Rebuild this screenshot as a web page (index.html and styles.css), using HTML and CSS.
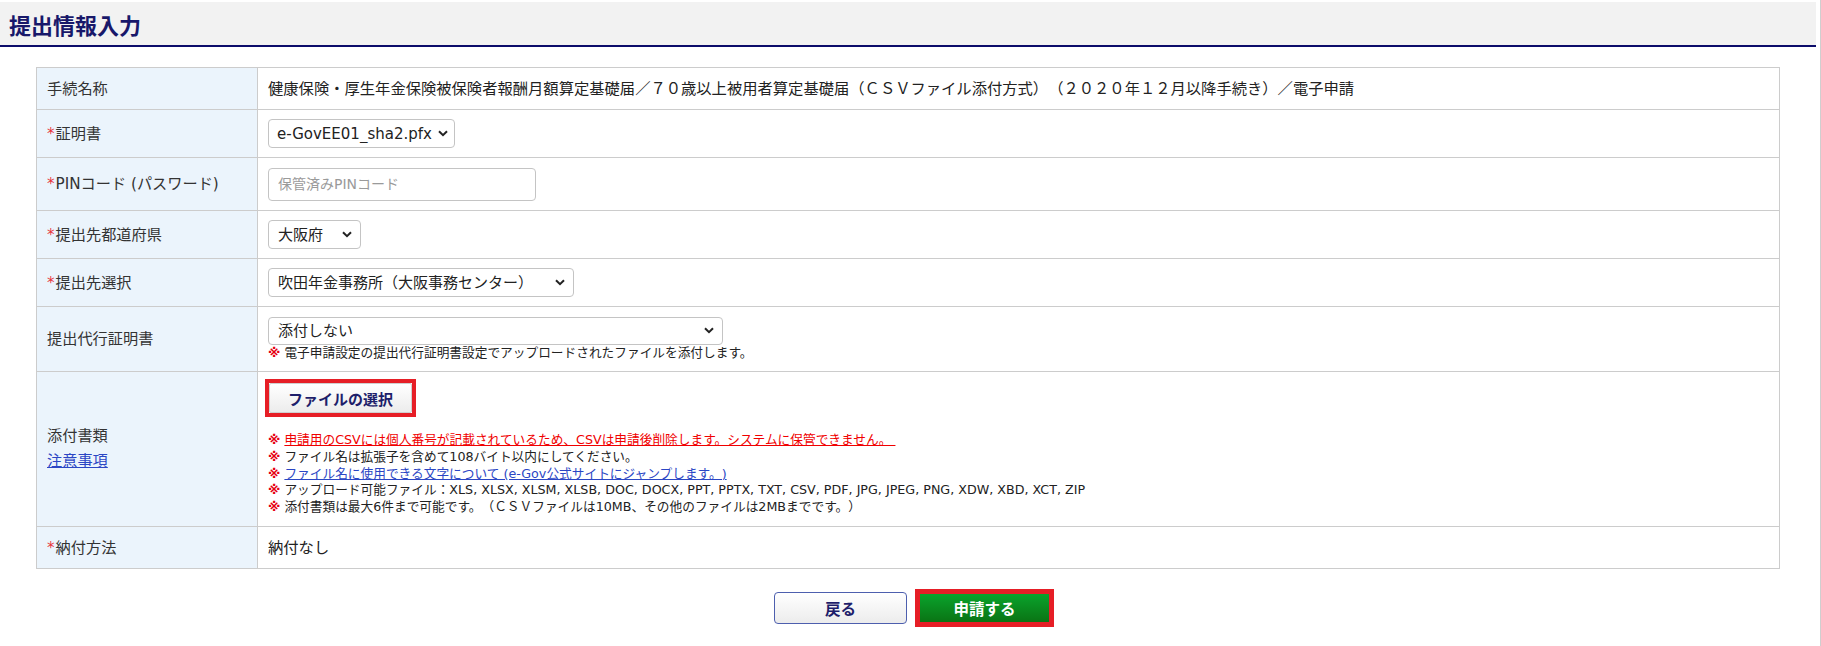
FILE: index.html
```html
<!DOCTYPE html>
<html lang="ja">
<head>
<meta charset="utf-8">
<title>提出情報入力</title>
<link rel="stylesheet" href="styles.css">
</head>
<body>
<div class="page">
  <header class="page-head"><h1 class="page-title">提出情報入力</h1></header>
  <main class="content">
    <table class="form-table">
      <colgroup><col class="col-label"><col class="col-value"></colgroup>
      <tr class="r1">
        <th>手続名称</th>
        <td class="value-text">健康保険・厚生年金保険被保険者報酬月額算定基礎届／７０歳以上被用者算定基礎届（ＣＳＶファイル添付方式）（２０２０年１２月以降手続き）／電子申請</td>
      </tr>
      <tr class="r2">
        <th><span class="req">*</span>証明書</th>
        <td><span class="sel sel-cert"><select class="select"><option>e-GovEE01_sha2.pfx</option></select><svg class="chev" width="10" height="7" viewBox="0 0 10 7"><path d="M1 1.2 L5 5.2 L9 1.2" fill="none" stroke="#222" stroke-width="2"/></svg></span></td>
      </tr>
      <tr class="r3">
        <th><span class="req">*</span>PINコード (パスワード)</th>
        <td><input class="text-input" type="password" placeholder="保管済みPINコード"></td>
      </tr>
      <tr class="r4">
        <th><span class="req">*</span>提出先都道府県</th>
        <td><span class="sel sel-pref"><select class="select"><option>大阪府</option></select><svg class="chev" width="10" height="7" viewBox="0 0 10 7"><path d="M1 1.2 L5 5.2 L9 1.2" fill="none" stroke="#222" stroke-width="2"/></svg></span></td>
      </tr>
      <tr class="r5">
        <th><span class="req">*</span>提出先選択</th>
        <td><span class="sel sel-office"><select class="select"><option>吹田年金事務所（大阪事務センター）</option></select><svg class="chev" width="10" height="7" viewBox="0 0 10 7"><path d="M1 1.2 L5 5.2 L9 1.2" fill="none" stroke="#222" stroke-width="2"/></svg></span></td>
      </tr>
      <tr class="r6">
        <th>提出代行証明書</th>
        <td class="cell-stack">
          <span class="sel sel-proxy"><select class="select"><option>添付しない</option></select><svg class="chev" width="10" height="7" viewBox="0 0 10 7"><path d="M1 1.2 L5 5.2 L9 1.2" fill="none" stroke="#222" stroke-width="2"/></svg></span>
          <p class="note"><span class="kome">※</span> 電子申請設定の提出代行証明書設定でアップロードされたファイルを添付します。</p>
        </td>
      </tr>
      <tr class="r7">
        <th class="label-stack">添付書類<br><a class="link-blue" href="#">注意事項</a></th>
        <td class="cell-stack">
          <div class="file-frame"><button class="btn-file" type="button">ファイルの選択</button></div>
          <ul class="notes">
            <li><span class="kome">※</span> <a class="link-red" href="#">申請用のCSVには個人番号が記載されているため、CSVは申請後削除します。システムに保管できません。&nbsp;</a></li>
            <li><span class="kome">※</span> ファイル名は拡張子を含めて108バイト以内にしてください。</li>
            <li><span class="kome">※</span> <a class="link-blue" href="#">ファイル名に使用できる文字について (e-Gov公式サイトにジャンプします。)</a></li>
            <li><span class="kome">※</span> アップロード可能ファイル：XLS, XLSX, XLSM, XLSB, DOC, DOCX, PPT, PPTX, TXT, CSV, PDF, JPG, JPEG, PNG, XDW, XBD, XCT, ZIP</li>
            <li><span class="kome">※</span> 添付書類は最大6件まで可能です。（ＣＳＶファイルは10MB、その他のファイルは2MBまでです。）</li>
          </ul>
        </td>
      </tr>
      <tr class="r8">
        <th><span class="req">*</span>納付方法</th>
        <td class="value-text">納付なし</td>
      </tr>
    </table>
    <div class="actions">
      <button class="btn-back" type="button">戻る</button>
      <div class="submit-frame"><button class="btn-submit" type="button">申請する</button></div>
    </div>
  </main>
</div>
</body>
</html>
```
FILE: styles.css
```css
* { box-sizing: border-box; }
html, body { margin: 0; padding: 0; background: #fff; }
body {
  font-family: "DejaVu Sans", "Noto Sans CJK JP", sans-serif;
  font-size: 15px;
  color: #333;
  text-spacing-trim: space-all;
}
.page {
  width: 1821px;
  height: 646px;
  border-right: 1px solid #cfcfcf;
  overflow: hidden;
}
.page-head {
  margin: 2px 4px 0 0;
  height: 45px;
  background: #f2f2f2;
  border-bottom: 2px solid #0c0c6a;
  display: flex;
  align-items: center;
  padding-left: 9px;
}
.page-title {
  margin: 0;
  font-family: "Noto Sans CJK JP", sans-serif;
  font-size: 22px;
  font-weight: 700;
  line-height: 1;
  color: #18186a;
}
.content { padding: 20px 0 0 36px; }
.form-table {
  width: 1744px;
  border-collapse: collapse;
  table-layout: fixed;
}
.col-label { width: 221px; }
.form-table th,
.form-table td {
  border: 1px solid #cccccc;
  padding: 0 10px;
  vertical-align: middle;
  text-align: left;
  font-weight: 400;
  line-height: 20px;
}
.form-table th { background: #ebf4fc; color: #333; font-size: 15.2px; }
.form-table td { color: #222; }
.value-text { font-size: 15.3px; }
.r1 th { height: 42px; }
.r2 th { height: 48px; }
.r3 th { height: 53px; }
.r4 th { height: 48px; }
.r5 th { height: 48px; }
.r6 th { height: 65px; }
.r7 th { height: 155px; }
.r8 th { height: 42px; }
.req { color: #e8343a; margin-right: 1px; }

.sel { position: relative; display: inline-block; vertical-align: middle; }
.select {
  appearance: none;
  -webkit-appearance: none;
  display: block;
  width: 100%;
  height: 29px;
  border: 1px solid #c4c4c4;
  border-radius: 4px;
  background: #fff;
  padding: 0 24px 0 9px;
  font-family: "DejaVu Sans", "Noto Sans CJK JP", sans-serif;
  font-size: 15px;
  color: #222;
}
.chev { position: absolute; right: 9px; top: 11px; pointer-events: none; }
.sel-cert { width: 187px; }
.sel-cert .select { padding-right: 18px; padding-left: 8px; }
.sel-cert .chev { right: 7px; }
.sel-pref { width: 93px; }
.sel-office { width: 306px; }
.sel-proxy { width: 455px; }
.sel-proxy .select { height: 28px; }
.sel-proxy .chev { top: 10px; }

.text-input {
  display: block;
  width: 268px;
  height: 33px;
  border: 1px solid #c4c4c4;
  border-radius: 4px;
  padding: 0 9px;
  font-family: "DejaVu Sans", "Noto Sans CJK JP", sans-serif;
  font-size: 14px;
}
.text-input::placeholder { color: #9a9a9a; }

.cell-stack { padding-top: 10px; padding-bottom: 10px; }
.note {
  margin: 0;
  font-size: 12.7px;
  line-height: 16.8px;
  color: #222;
}
.kome { color: #e60012; font-weight: 700; }

.r7 td { padding-top: 7px; padding-bottom: 10px; }
.label-stack { line-height: 25px !important; }
.file-frame {
  display: inline-flex;
  margin-left: -3px;
  border: 4px solid #e61e26;
}
.btn-file {
  width: 143px;
  height: 30px;
  border: 1px solid #cfcfcf;
  border-radius: 2px;
  background: linear-gradient(#ffffff, #ececec);
  font-family: "Noto Sans CJK JP", sans-serif;
  font-size: 15px;
  font-weight: 700;
  color: #1e1e6a;
  padding: 0;
}
.notes {
  list-style: none;
  margin: 15px 0 0;
  padding: 0;
  font-size: 12.7px;
  line-height: 16.8px;
  color: #222;
}
.link-red { color: #f00000; text-decoration: underline; }
.link-blue { color: #2b46c4; text-decoration: underline; }

.actions {
  width: 1744px;
  margin-top: 20px;
  padding-left: 12px;
  display: flex;
  justify-content: center;
  align-items: center;
  gap: 8px;
}
.btn-back {
  width: 133px;
  height: 32px;
  border: 1px solid #4d5fae;
  border-radius: 4px;
  background: linear-gradient(#ffffff, #ececec);
  font-family: "Noto Sans CJK JP", sans-serif;
  font-size: 15.5px;
  font-weight: 700;
  color: #1e1e6a;
  padding: 0;
}
.submit-frame {
  display: flex;
  border: 5px solid #e61e26;
}
.btn-submit {
  width: 129px;
  height: 28px;
  border: 0;
  background: linear-gradient(#0aa32c, #0a7414);
  font-family: "Noto Sans CJK JP", sans-serif;
  font-size: 15.5px;
  font-weight: 700;
  color: #fff;
  padding: 0;
}
```
